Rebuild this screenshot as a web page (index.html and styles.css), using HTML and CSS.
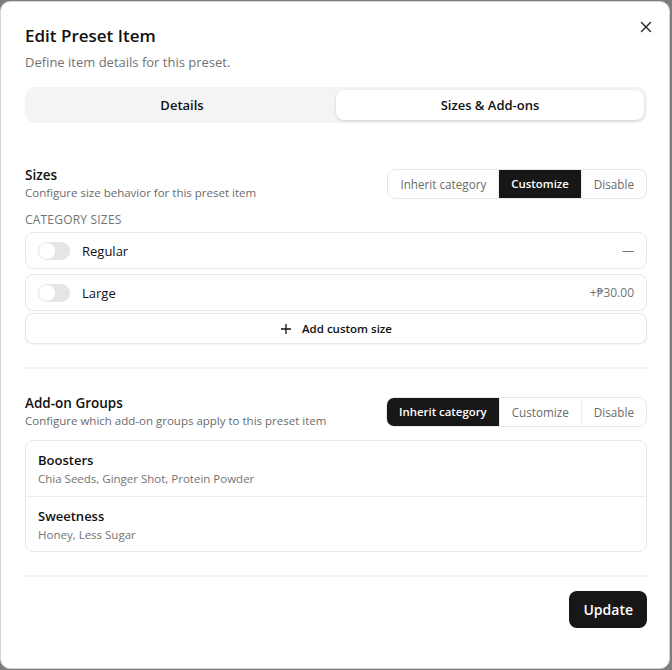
FILE: index.html
```html
<!DOCTYPE html>
<html lang="en">
<head>
    <meta charset="UTF-8">
    <meta name="viewport" content="width=device-width, initial-scale=1.0">
    <title>Edit Preset Item</title>
    <link rel="stylesheet" href="styles.css">
</head>
<body>
    <div class="dialog">
        <button class="fechar" aria-label="Close">
            <svg width="12" height="12" viewBox="0 0 12 12"><path d="M1.5 1.5l9 9M10.5 1.5l-9 9" stroke="#222" stroke-width="1.4" stroke-linecap="round"/></svg>
        </button>

        <h1 class="titulo">Edit Preset Item</h1>
        <p class="subtitulo">Define item details for this preset.</p>

        <div class="abas">
            <div class="aba">Details</div>
            <div class="aba ativa">Sizes &amp; Add-ons</div>
        </div>

        <div class="secao">
            <div class="cabecalho">
                <div>
                    <h2 class="secao-titulo">Sizes</h2>
                    <p class="secao-desc">Configure size behavior for this preset item</p>
                </div>
                <div class="segmentos">
                    <span class="seg">Inherit category</span>
                    <span class="seg ativo">Customize</span>
                    <span class="seg">Disable</span>
                </div>
            </div>

            <p class="rotulo">Category sizes</p>

            <div class="linhas">
                <div class="linha">
                    <span class="toggle"></span>
                    <span class="nome">Regular</span>
                    <span class="preco">—</span>
                </div>
                <div class="linha">
                    <span class="toggle"></span>
                    <span class="nome">Large</span>
                    <span class="preco">+₱30.00</span>
                </div>
                <button class="adicionar">
                    <svg width="12" height="12" viewBox="0 0 12 12"><path d="M6 1v10M1 6h10" stroke="#111" stroke-width="1.3"/></svg>
                    Add custom size
                </button>
            </div>
        </div>

        <hr class="divisor">

        <div class="secao segunda">
            <div class="cabecalho">
                <div>
                    <h2 class="secao-titulo">Add-on Groups</h2>
                    <p class="secao-desc">Configure which add-on groups apply to this preset item</p>
                </div>
                <div class="segmentos">
                    <span class="seg ativo">Inherit category</span>
                    <span class="seg">Customize</span>
                    <span class="seg">Disable</span>
                </div>
            </div>

            <div class="grupos">
                <div class="grupo">
                    <p class="grupo-nome">Boosters</p>
                    <p class="grupo-itens">Chia Seeds, Ginger Shot, Protein Powder</p>
                </div>
                <div class="grupo">
                    <p class="grupo-nome">Sweetness</p>
                    <p class="grupo-itens">Honey, Less Sugar</p>
                </div>
            </div>
        </div>

        <hr class="divisor">

        <div class="rodape">
            <button class="atualizar">Update</button>
        </div>
    </div>
</body>
</html>
```

FILE: styles.css
```css
* {
    box-sizing: border-box;
}

body {
    margin: 0;
    background-color: #7c7c7c;
    font-family: "Open Sans", "Noto Sans", sans-serif;
    color: #111;
}

.dialog {
    position: relative;
    width: 670px;
    height: 668px;
    margin: 1px 0 0 0;
    background-color: #fff;
    border: 1px solid #d4d4d4;
    border-radius: 10px;
    padding: 21px 22px 0 24px;
}

.fechar {
    position: absolute;
    top: 19px;
    right: 17px;
    border: none;
    background: none;
    padding: 0;
    width: 12px;
    height: 12px;
}

.titulo {
    margin: 0;
    font-size: 17px;
    font-weight: 600;
    line-height: 26px;
}

.subtitulo {
    margin: 4px 0 0;
    font-size: 13px;
    color: #737373;
    line-height: 18px;
}

.abas {
    display: grid;
    grid-template-columns: 1fr 1fr;
    margin-top: 16px;
    background-color: #f4f4f4;
    border-radius: 10px;
    padding: 3px;
    height: 36px;
}

.aba {
    display: flex;
    align-items: center;
    justify-content: center;
    font-size: 13px;
    font-weight: 600;
    border-radius: 8px;
}

.aba.ativa {
    background-color: #fff;
    box-shadow: 0 1px 3px rgba(0, 0, 0, 0.15);
}

.secao {
    margin-top: 43px;
}

.secao.segunda {
    margin-top: 25px;
}

.cabecalho {
    display: flex;
    justify-content: space-between;
    align-items: center;
}

.secao-titulo {
    margin: 0;
    font-size: 13.5px;
    font-weight: 600;
    line-height: 18px;
}

.secao-desc {
    margin: 1px 0 0;
    font-size: 11.5px;
    color: #6b6b6b;
    line-height: 16px;
}

.segmentos {
    display: flex;
    border: 1px solid #e6e6e6;
    border-radius: 8px;
    overflow: hidden;
    height: 30px;
}

.seg {
    display: flex;
    align-items: center;
    padding: 0 12px;
    font-size: 11.7px;
    color: #6b6b6b;
    font-weight: 500;
}

.seg + .seg {
    border-left: 1px solid #ececec;
}

.seg.ativo {
    background-color: #171717;
    color: #fff;
    font-weight: 600;
    font-size: 11.4px;
}

.rotulo {
    margin: 11px 0 4px;
    font-size: 12px;
    letter-spacing: 0.2px;
    text-transform: uppercase;
    color: #737373;
    line-height: 16px;
}

.linhas {
    display: flex;
    flex-direction: column;
    gap: 5px;
}

.linha {
    display: flex;
    align-items: center;
    height: 37px;
    border: 1px solid #e8e8e8;
    border-radius: 8px;
    padding: 0 12px;
}

.toggle {
    position: relative;
    width: 32px;
    height: 18px;
    border-radius: 9px;
    background-color: #e5e5e5;
}

.toggle::after {
    content: "";
    position: absolute;
    left: 1px;
    top: 1px;
    width: 16px;
    height: 16px;
    border-radius: 50%;
    background-color: #fff;
}

.nome {
    margin-left: 12px;
    font-size: 13px;
    flex: 1;
}

.preco {
    font-size: 12px;
    color: #737373;
}

.adicionar {
    display: flex;
    align-items: center;
    justify-content: center;
    gap: 10px;
    height: 31px;
    margin-top: -3px;
    border: 1px solid #e8e8e8;
    border-radius: 8px;
    background-color: #fff;
    box-shadow: 0 1px 2px rgba(0, 0, 0, 0.06);
    font-family: inherit;
    font-size: 11.5px;
    font-weight: 600;
    color: #111;
}

.divisor {
    margin: 23px 0 0;
    border: none;
    border-top: 2px solid #f1f1f1;
}

.grupos {
    margin-top: 11px;
    border: 1px solid #e8e8e8;
    border-radius: 8px;
}

.grupo {
    height: 55px;
    padding: 10px 12px 0;
}

.grupo + .grupo {
    border-top: 1px solid #ececec;
}

.grupo-nome {
    margin: 0;
    font-size: 13px;
    font-weight: 600;
    line-height: 18px;
}

.grupo-itens {
    margin: 2px 0 0;
    font-size: 11.5px;
    color: #737373;
    line-height: 16px;
}

.rodape {
    display: flex;
    justify-content: flex-end;
    margin-top: 14px;
}

.atualizar {
    height: 37px;
    padding: 0 14px;
    border: none;
    border-radius: 8px;
    background-color: #171717;
    color: #fff;
    font-family: inherit;
    font-size: 14px;
    font-weight: 600;
}
```
